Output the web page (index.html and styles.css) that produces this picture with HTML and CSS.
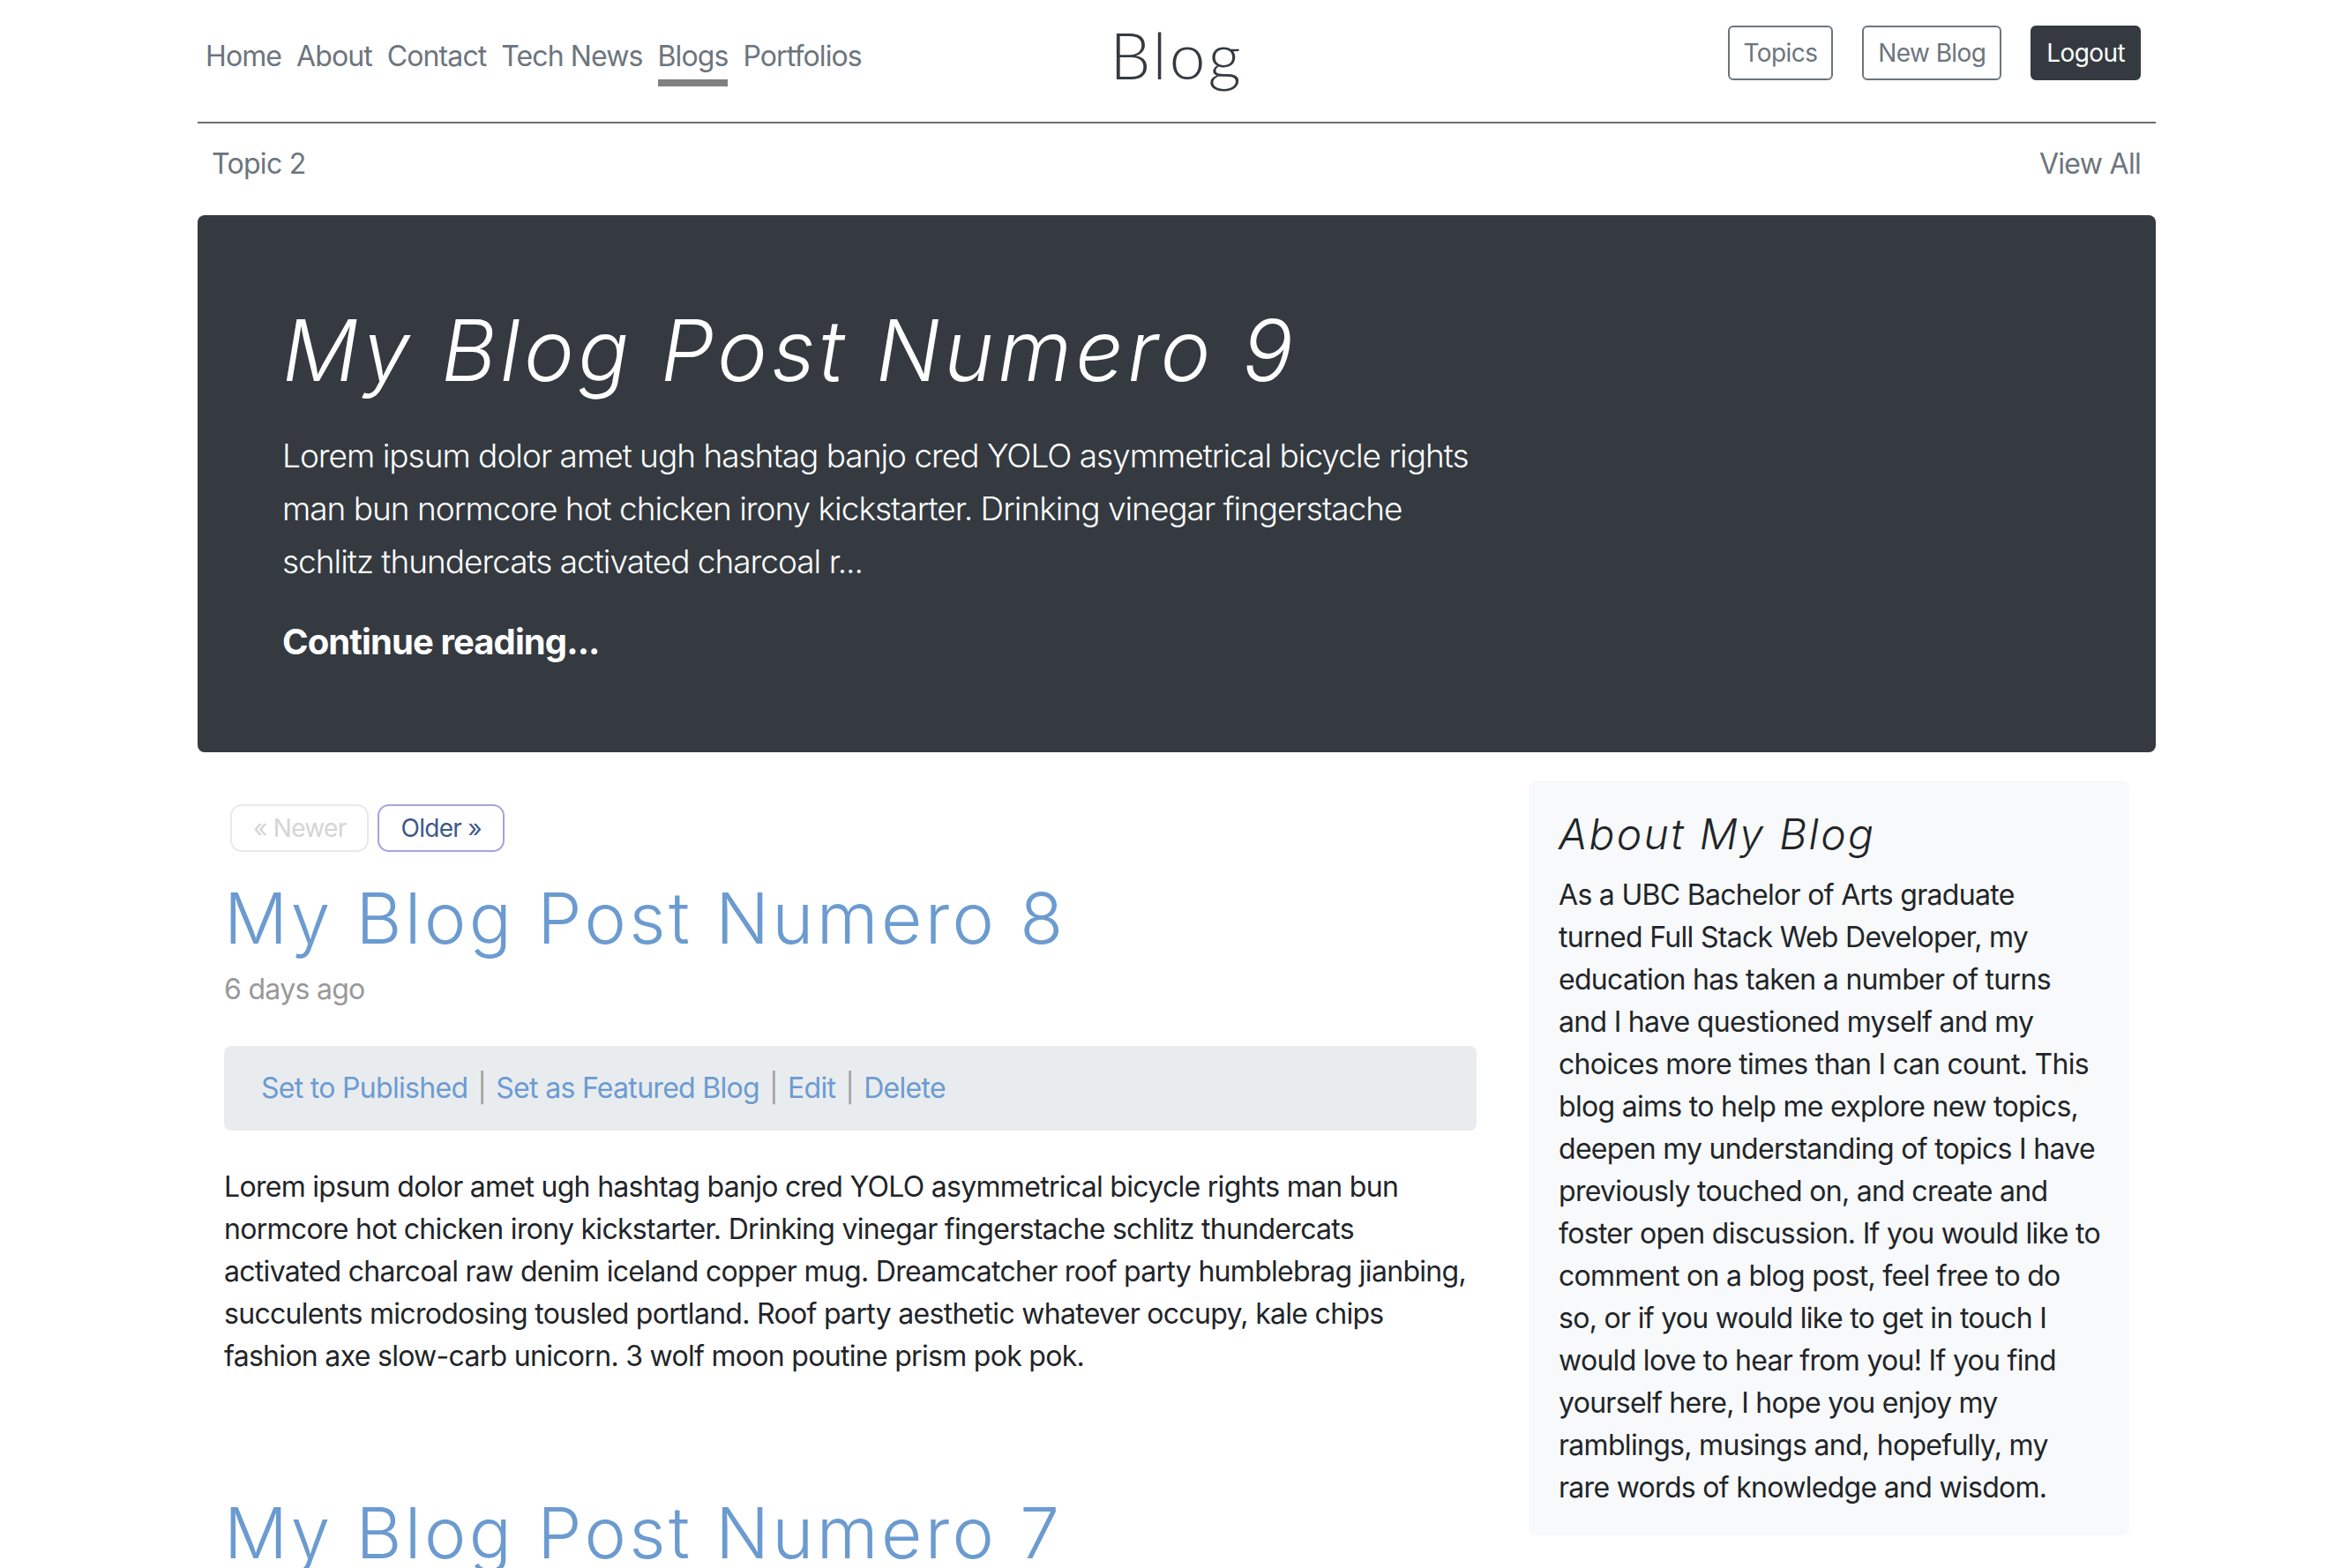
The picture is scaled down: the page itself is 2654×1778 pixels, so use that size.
FILE: index.html
```html
<!DOCTYPE html>
<html lang="en">
<head>
<meta charset="utf-8">
<title>Blog</title>
<link rel="stylesheet" href="styles.css">
</head>
<body>
<div class="container">
  <header class="site-header">
    <nav class="main-nav">
      <a class="nav-link" href="#">Home</a>
      <a class="nav-link" href="#">About</a>
      <a class="nav-link" href="#">Contact</a>
      <a class="nav-link" href="#">Tech News</a>
      <a class="nav-link active" href="#">Blogs</a>
      <a class="nav-link" href="#">Portfolios</a>
    </nav>
    <a class="logo" href="#">Blog</a>
    <div class="header-actions">
      <a class="btn btn-outline" href="#">Topics</a>
      <a class="btn btn-outline" href="#">New Blog</a>
      <a class="btn btn-dark" href="#">Logout</a>
    </div>
  </header>

  <div class="topic-bar">
    <a class="topic-link" href="#">Topic 2</a>
    <a class="topic-link" href="#">View All</a>
  </div>

  <section class="hero">
    <h1 class="hero-title">My Blog Post Numero 9</h1>
    <p class="hero-lead">Lorem ipsum dolor amet ugh hashtag banjo cred YOLO asymmetrical bicycle rights<br>man bun normcore hot chicken irony kickstarter. Drinking vinegar fingerstache<br>schlitz thundercats activated charcoal r...</p>
    <p class="hero-more"><a href="#">Continue reading...</a></p>
  </section>

  <div class="content-row">
    <main class="blog-main">
      <nav class="pager">
        <a class="pager-btn disabled" href="#">&laquo; Newer</a>
        <a class="pager-btn" href="#">Older &raquo;</a>
      </nav>

      <article class="blog-post">
        <h2 class="post-title"><a href="#">My Blog Post Numero 8</a></h2>
        <p class="post-meta">6 days ago</p>
        <div class="post-actions">
          <a href="#">Set to Published</a><span class="sep">|</span><a href="#">Set as Featured Blog</a><span class="sep">|</span><a href="#">Edit</a><span class="sep">|</span><a href="#">Delete</a>
        </div>
        <p class="post-body">Lorem ipsum dolor amet ugh hashtag banjo cred YOLO asymmetrical bicycle rights man bun normcore hot chicken irony kickstarter. Drinking vinegar fingerstache schlitz thundercats activated charcoal raw denim iceland copper mug. Dreamcatcher roof party humblebrag jianbing, succulents microdosing tousled portland. Roof party aesthetic whatever occupy, kale chips fashion axe slow-carb unicorn. 3 wolf moon poutine prism pok pok.</p>
      </article>

      <article class="blog-post">
        <h2 class="post-title"><a href="#">My Blog Post Numero 7</a></h2>
      </article>
    </main>

    <aside class="sidebar">
      <div class="about-box">
        <h4 class="about-title">About My Blog</h4>
        <p class="about-text">As a UBC Bachelor of Arts graduate<br>turned Full Stack Web Developer, my<br>education has taken a number of turns<br>and I have questioned myself and my<br>choices more times than I can count. This<br>blog aims to help me explore new topics,<br>deepen my understanding of topics I have<br>previously touched on, and create and<br>foster open discussion. If you would like to<br>comment on a blog post, feel free to do<br>so, or if you would like to get in touch I<br>would love to hear from you! If you find<br>yourself here, I hope you enjoy my<br>ramblings, musings and, hopefully, my<br>rare words of knowledge and wisdom.</p>
      </div>
    </aside>
  </div>
</div>
</body>
</html>
```

FILE: styles.css
```css
* { box-sizing: border-box; }

html, body {
  margin: 0;
  padding: 0;
  background: #ffffff;
}

body {
  font-family: "Inter", "Noto Sans", "Liberation Sans", sans-serif;
  font-size: 32px;
  line-height: 48px;
  letter-spacing: -0.7px;
  color: #212529;
  overflow: hidden;
}

a { text-decoration: none; color: inherit; }

.container {
  width: 2220px;
  margin-left: 224px;
}

/* ---------- header ---------- */
.site-header {
  display: grid;
  grid-template-columns: 1fr auto 1fr;
  align-items: start;
  height: 140px;
  border-bottom: 2px solid #6e6e6e;
}

.main-nav {
  display: flex;
  gap: 17px;
  padding-left: 9px;
  padding-top: 40px;
}

.nav-link {
  color: #6c757d;
  font-size: 32px;
  line-height: 48px;
  letter-spacing: -0.9px;
  padding-bottom: 2px;
}

.nav-link.active {
  border-bottom: 8px solid #808080;
}

.logo {
  font-family: "Lato", "Open Sans", sans-serif;
  font-weight: 300;
  font-size: 73px;
  line-height: 72px;
  letter-spacing: 3px;
  color: #343a40;
  padding-top: 26px;
}

.header-actions {
  display: flex;
  justify-content: flex-end;
  gap: 33px;
  padding-top: 29px;
  padding-right: 17px;
}

.btn {
  display: inline-block;
  font-size: 28px;
  line-height: 42px;
  letter-spacing: -0.6px;
  padding: 8px 16px;
  border: 2px solid #6c757d;
  border-radius: 6px;
  color: #6c757d;
}

.btn-dark {
  background: #343a40;
  border-color: #343a40;
  color: #ffffff;
}

/* ---------- topic bar ---------- */
.topic-bar {
  display: flex;
  justify-content: space-between;
  padding: 22px 17px 0 16px;
  height: 104px;
}

.topic-link {
  color: #6c757d;
  font-size: 32px;
  line-height: 48px;
}

/* ---------- hero ---------- */
.hero {
  background: #343a40;
  border-radius: 8px;
  padding: 96px 96px 95px 96px;
  color: #ffffff;
  height: 609px;
}

.hero-title {
  margin: 0;
  font-family: "Inter", sans-serif;
  font-style: italic;
  font-weight: 350;
  font-size: 96px;
  line-height: 115px;
  letter-spacing: 4.4px;
}

.hero-lead {
  margin: 32px 0 0 0;
  font-size: 37px;
  line-height: 60px;
  font-weight: 300;
  letter-spacing: -1px;
  white-space: nowrap;
}

.hero-more {
  margin: 31px 0 0 0;
  font-size: 40px;
  line-height: 60px;
  font-weight: 700;
  letter-spacing: -0.9px;
}

/* ---------- content ---------- */
.content-row {
  display: grid;
  grid-template-columns: 1420px 681px;
  column-gap: 59px;
  padding: 0 30px;
  margin-top: 32px;
  align-items: start;
}

.pager {
  display: flex;
  gap: 10px;
  margin: 27px 0 0 7px;
}

.pager-btn {
  display: inline-block;
  font-size: 28px;
  line-height: 50px;
  padding: 0 24px;
  border: 2px solid #a4a4dc;
  border-radius: 13px;
  color: #3c5a8a;
}

.pager-btn.disabled {
  border-color: #e9e9e9;
  color: #d4d4d4;
}

.blog-post {
  margin-bottom: 128px;
}

.post-title {
  margin: 27px 0 0 0;
  font-family: "Inter", sans-serif;
  font-weight: 350;
  font-size: 80px;
  line-height: 96px;
  letter-spacing: 3.4px;
  color: #6b9bd0;
}

.post-meta {
  margin: 9px 0 0 0;
  color: #999999;
  font-size: 32px;
  line-height: 48px;
}

.post-actions {
  margin-top: 40px;
  background: #e9ecef;
  border-radius: 8px;
  height: 96px;
  padding: 24px 42px;
  line-height: 48px;
  color: #6c9bd2;
}

.post-actions .sep {
  color: #a0a0a0;
  padding: 0 11px;
}

.post-body {
  margin: 40px 0 0 0;
}

.about-box {
  background: #f8f9fa;
  border-radius: 8px;
  padding: 32px 12px 30px 34px;
}

.about-title {
  margin: 0 0 16px 0;
  font-family: "Inter", sans-serif;
  font-style: italic;
  font-weight: 350;
  font-size: 48px;
  line-height: 58px;
  letter-spacing: 2.3px;
}

.about-text {
  margin: 0;
  white-space: nowrap;
}
```
